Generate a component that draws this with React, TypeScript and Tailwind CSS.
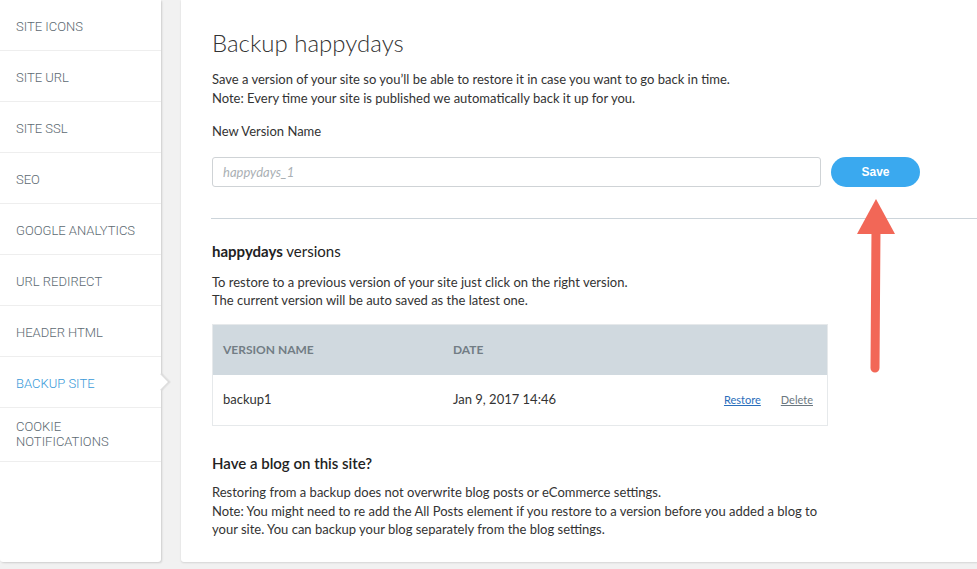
const NAV = [
  "SITE ICONS",
  "SITE URL",
  "SITE SSL",
  "SEO",
  "GOOGLE ANALYTICS",
  "URL REDIRECT",
  "HEADER HTML",
  "BACKUP SITE",
  "COOKIE NOTIFICATIONS",
];

const body = { fontFamily: "Lato, 'Open Sans', sans-serif" };

export default function App() {
  return (
    <div className="flex h-[569px] w-[977px] overflow-hidden bg-[#f1f1f1]" style={body}>
      {/* sidebar */}
      <aside
        className="relative h-[562px] w-[161px] shrink-0 rounded-b-[3px] bg-white shadow-[1px_1px_2px_rgba(0,0,0,0.15)]"
        style={{ fontFamily: "Roboto, 'Liberation Sans', sans-serif" }}
      >
        {NAV.map((n) => {
          const active = n === "BACKUP SITE";
          const tall = n === "COOKIE NOTIFICATIONS";
          return (
            <div
              key={n}
              className={`relative flex items-center border-b border-[#eeeeee] pl-4 pr-2 text-[13px] font-light leading-[15px] ${
                tall ? "h-[54px] pb-[2px]" : "h-[51px] pt-[2px]"
              } ${active ? "text-[#3a9ad9]" : "text-[#5d6a72]"}`}
            >
              {tall ? (
                <span>
                  COOKIE
                  <br />
                  NOTIFICATIONS
                </span>
              ) : (
                n
              )}
              {active && (
                <span className="absolute right-[-6px] top-1/2 h-3 w-3 -translate-y-1/2 rotate-45 border-r border-t border-[#d8d8d8] bg-white shadow-[1px_-1px_1px_rgba(0,0,0,0.08)]" />
              )}
            </div>
          );
        })}
      </aside>

      {/* main card */}
      <main className="relative ml-5 h-[562px] flex-1 rounded-bl-[3px] bg-white pt-[28px] shadow-[0_1px_2px_rgba(0,0,0,0.12)]">
        <div className="pl-[31px]">
          <h1 className="text-[24px] font-light leading-[30px] text-[#333]">Backup happydays</h1>
          <p className="mt-[12px] text-[13px] leading-[19px] text-[#333]">
            Save a version of your site so you’ll be able to restore it in case you want to go back in time.
            <br />
            Note: Every time your site is published we automatically back it up for you.
          </p>
          <p className="mt-[14px] text-[13px] leading-[19px] text-[#333]">New Version Name</p>

          <div className="mt-[16px] flex items-center gap-[10px]">
            <input
              placeholder="happydays_1"
              className="h-[30px] w-[609px] rounded-[3px] border border-[#cfd3d6] px-[10px] text-[13px] italic text-[#333] outline-none placeholder:text-[#aab0b4]"
            />
            <button
              className="h-[30px] w-[89px] rounded-full bg-[#3aa9ef] text-[12px] font-bold text-white"
              style={{ fontFamily: "'Liberation Sans', Arial, sans-serif" }}
            >
              Save
            </button>
          </div>
        </div>

        <div className="ml-[30px] mt-[31px] border-t border-[#ccd4da]" />

        <div className="pl-[31px] pr-[150px]">
          <h2 className="mt-[22px] text-[15px] leading-[20px] text-[#222]">
            <span className="font-bold">happydays</span> versions
          </h2>
          <p className="mt-[12px] text-[13px] leading-[18px] text-[#333]">
            To restore to a previous version of your site just click on the right version.
            <br />
            The current version will be auto saved as the latest one.
          </p>

          <div className="mt-[15px] w-[616px] border border-[#e6e9eb]">
            <div className="flex h-[50px] items-center bg-[#d0d9df] text-[12px] font-bold text-[#727d85]">
              <span className="w-[240px] pl-[10px]">VERSION NAME</span>
              <span>DATE</span>
            </div>
            <div className="flex h-[50px] items-center text-[13px] text-[#333]">
              <span className="w-[240px] pl-[10px]">backup1</span>
              <span className="flex-1">Jan 9, 2017 14:46</span>
              <a className="mr-[20px] text-[11px] text-[#2a6ebb] underline">Restore</a>
              <a className="mr-[14px] text-[11px] text-[#6b7780] underline">Delete</a>
            </div>
          </div>

          <h3 className="mt-[27px] text-[15px] font-semibold leading-[20px] text-[#222]">Have a blog on this site?</h3>
          <p className="mt-[10px] text-[13px] leading-[18.5px] text-[#333]">
            Restoring from a backup does not overwrite blog posts or eCommerce settings.
            <br />
            Note: You might need to re add the All Posts element if you restore to a version before you added a blog to
            your site. You can backup your blog separately from the blog settings.
          </p>
        </div>

        {/* annotation arrow */}
        <svg className="absolute left-[666px] top-[196px]" width="60" height="180" viewBox="0 0 60 180">
          <path d="M29 34 L28 172" stroke="#f26757" strokeWidth="9" strokeLinecap="round" />
          <path d="M29 3 L48 38 L10 38 Z" fill="#f26757" />
        </svg>
      </main>
    </div>
  );
}
